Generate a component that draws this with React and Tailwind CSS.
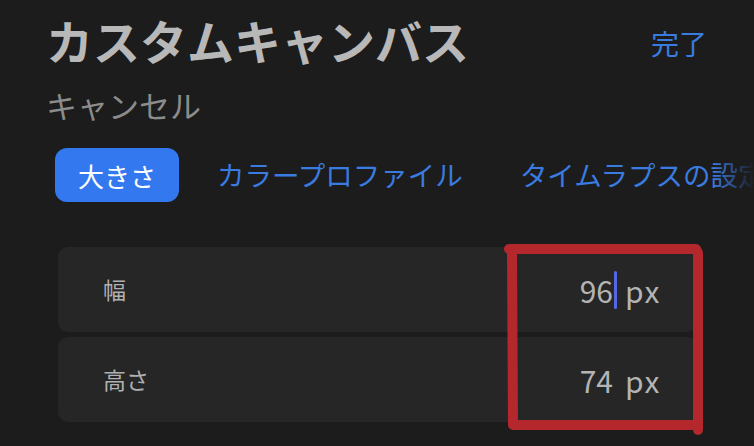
export default function App() {
  const tabs = ["大きさ", "カラープロファイル", "タイムラプスの設定"];
  const rows = [
    { label: "幅", value: "96", cursor: true },
    { label: "高さ", value: "74", cursor: false },
  ];

  return (
    <div
      className="relative w-[754px] h-[446px] overflow-hidden bg-[#1c1c1d] text-[#b4b4b4]"
      style={{ fontFamily: '"Noto Sans CJK JP", "Noto Sans", sans-serif' }}
    >
      {/* header */}
      <div className="flex items-start justify-between pl-[46px] pr-[47px] pt-[14px]">
        <h1 className="text-[47px] leading-[52px] font-bold text-[#b8b8b8]">
          カスタムキャンバス
        </h1>
        <button className="mt-[14px] text-[28px] leading-[30px] text-[#3a7be0]">完了</button>
      </div>
      <p className="pl-[46px] mt-[21px] text-[31px] leading-[36px] text-[#8c8c8c]">キャンセル</p>

      {/* tabs, last one runs off the edge and fades out */}
      <div className="relative mt-[25px] flex items-center gap-[11px] pl-[55px] whitespace-nowrap">
        {tabs.map((t, i) => (
          <div
            key={t}
            className={
              i === 0
                ? "h-[54px] px-[23px] mr-[4px] flex items-center rounded-[12px] bg-[#3478f0] text-white text-[26px]"
                : "h-[54px] px-[23px] flex items-center text-[27.5px] text-[#3a7be0]"
            }
          >
            {t}
          </div>
        ))}
        <div className="absolute right-0 top-0 h-[54px] w-[40px] bg-gradient-to-r from-transparent to-[#1c1c1d]" />
      </div>

      {/* rows */}
      <div className="mt-[45px] ml-[58px] w-[639px] flex flex-col gap-[5px]">
        {rows.map((r) => (
          <div
            key={r.label}
            className="h-[85px] rounded-[10px] bg-[#262627] flex items-center justify-between pl-[45px] pr-[36px]"
          >
            <span className="text-[23px] text-[#b0b0b0]">{r.label}</span>
            <span className="flex items-center text-[30px] leading-[36px] text-[#b4b4b4]">
              <span>{r.value}</span>
              {r.cursor ? (
                <span className="ml-[1px] mr-[8px] w-[3px] h-[38px] rounded-full bg-[#5468e6]" />
              ) : (
                <span className="w-[12px]" />
              )}
              <span className="tracking-[1.5px]">px</span>
            </span>
          </div>
        ))}
      </div>

      {/* red annotation */}
      <svg className="absolute left-0 top-0 pointer-events-none" width="754" height="446">
        <path
          d="M509 249 L696 249 L698 253 L698 430 M512 250 L513 425 L697 425"
          fill="none"
          stroke="#b3272d"
          strokeWidth="10"
          strokeLinecap="round"
          strokeLinejoin="round"
        />
      </svg>
    </div>
  );
}
